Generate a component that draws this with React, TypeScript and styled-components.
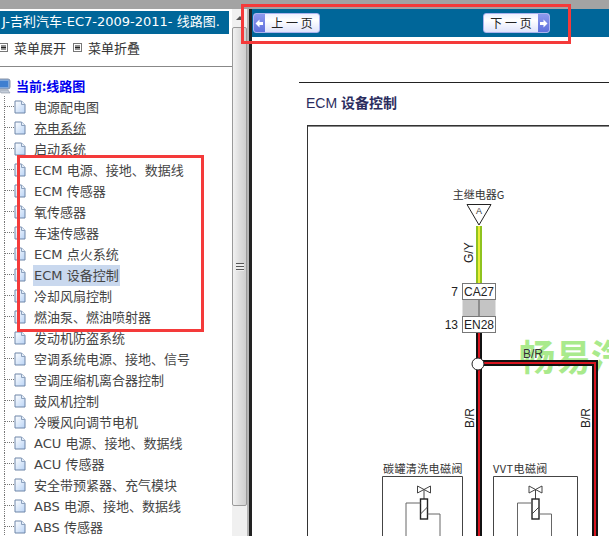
import React from "react";
import styled, { createGlobalStyle } from "styled-components";

const GlobalStyle = createGlobalStyle`
  html, body {
    margin: 0;
    padding: 0;
    background: #fff;
    overflow: hidden;
  }
  * {
    box-sizing: border-box;
  }
`;

const TREE_ITEMS = [
  "电源配电图",
  "充电系统",
  "启动系统",
  "ECM 电源、接地、数据线",
  "ECM 传感器",
  "氧传感器",
  "车速传感器",
  "ECM 点火系统",
  "ECM 设备控制",
  "冷却风扇控制",
  "燃油泵、燃油喷射器",
  "发动机防盗系统",
  "空调系统电源、接地、信号",
  "空调压缩机离合器控制",
  "鼓风机控制",
  "冷暖风向调节电机",
  "ACU 电源、接地、数据线",
  "ACU 传感器",
  "安全带预紧器、充气模块",
  "ABS 电源、接地、数据线",
  "ABS 传感器",
];

const CJK = "'Noto Sans CJK SC', sans-serif";
const ARIAL = "'Liberation Sans', sans-serif";

function PageIcon() {
  return (
    <svg width="12" height="14" viewBox="0 0 12 14">
      <defs>
        <linearGradient id="pageFill" x1="0" y1="0" x2="1" y2="1">
          <stop offset="0" stopColor="#ffffff" />
          <stop offset="1" stopColor="#b9d3f5" />
        </linearGradient>
      </defs>
      <path d="M1 1h6.5L11 4.5V13H1z" fill="url(#pageFill)" stroke="#6f86a8" strokeWidth="1" />
      <path d="M7.5 1v3.5H11" fill="#e6effa" stroke="#8ba0bd" strokeWidth="1" />
    </svg>
  );
}

function MenuIcon() {
  return (
    <svg width="9" height="9" viewBox="0 0 9 9">
      <rect x="0.5" y="0.5" width="8" height="8" fill="#fff" stroke="#777" />
      <path d="M2 3h5M2 4.5h5M2 6h5" stroke="#222" strokeWidth="1" />
    </svg>
  );
}

function ComputerIcon() {
  return (
    <svg width="12" height="16" viewBox="0 0 12 16">
      <rect x="-2" y="1" width="12" height="10" rx="2" fill="#7fa8dc" stroke="#8a94a6" />
      <rect x="0" y="3" width="8" height="6" fill="#3f7fd0" />
      <path d="M-1 12l9 0 2 3H1z" fill="#c3ccd8" stroke="#8a94a6" strokeWidth="0.6" />
    </svg>
  );
}

function NavArrow({ flip }: { flip?: boolean }) {
  return (
    <svg width="9" height="9" viewBox="0 0 9 9">
      <path
        d={flip ? "M8.5 4.5L4.5 0.5V3H1v3h3.5v2.5z" : "M0.5 4.5L4.5 0.5V3H8v3H4.5v2.5z"}
        fill="#fff"
      />
    </svg>
  );
}

function Valve({ x }: { x: number }) {
  return (
    <g fill="none" stroke="#444" strokeWidth="1">
      <path d={`M${x - 6.5} 486l13 7v-7l-13 7z`} />
      <path d={`M${x} 490v9`} />
      <rect x={x - 3.5} y="499" width="7" height="20" stroke="#222" strokeWidth="1.4" />
      <path d={`M${x - 3.5} 514l7-7`} />
      <path d={`M${x - 3.5} 503H${x - 18}V536`} stroke="#666" />
      <path d={`M${x + 3.5} 514H${x + 16}V536`} stroke="#666" />
    </g>
  );
}

function Wire({ d }: { d: string }) {
  return (
    <g fill="none">
      <path d={d} stroke="#111" strokeWidth="6" />
      <path d={d} stroke="#d8141f" strokeWidth="2" />
    </g>
  );
}

function Diagram() {
  return (
    <svg width="301" height="410" viewBox="308 126 301 410">
      <text x="519" y="371" fontSize="36" fontWeight="700" fill="#a9ea8c" fontFamily={CJK}>
        畅易汽
      </text>

      <text x="478.5" y="199" fontSize="11" textAnchor="middle" fill="#333" fontFamily={CJK}>
        主继电器G
      </text>
      <path d="M467 204.5H491L479 225z" fill="#fff" stroke="#222" strokeWidth="1" />
      <text x="479" y="214" fontSize="9" textAnchor="middle" fill="#333" fontFamily={ARIAL}>
        A
      </text>

      <path d="M479 226V283" stroke="#8fc31f" strokeWidth="6" />
      <path d="M479 226V283" stroke="#ecec3a" strokeWidth="2" />
      <text transform="translate(473 263) rotate(-90)" fontSize="12" fill="#222" fontFamily={ARIAL}>
        G/Y
      </text>

      <rect x="462.5" y="300" width="33" height="16" fill="#c4c4c4" />
      <path d="M479 300V316" stroke="#555" strokeWidth="1" />
      <rect x="462.5" y="283.5" width="33" height="16" fill="#fff" stroke="#777" />
      <rect x="462.5" y="316.5" width="33" height="16" fill="#fff" stroke="#777" />
      <text x="479" y="296" fontSize="12" textAnchor="middle" fill="#222" fontFamily={ARIAL}>
        CA27
      </text>
      <text x="479" y="329" fontSize="12" textAnchor="middle" fill="#222" fontFamily={ARIAL}>
        EN28
      </text>
      <text x="458" y="296" fontSize="12" textAnchor="end" fill="#222" fontFamily={ARIAL}>
        7
      </text>
      <text x="458" y="329" fontSize="12" textAnchor="end" fill="#222" fontFamily={ARIAL}>
        13
      </text>

      <Wire d="M479 333V536" />
      <Wire d="M479 363H595V536" />
      <circle cx="478" cy="364" r="6" fill="#fff" stroke="#222" strokeWidth="1" />

      <text x="523" y="358" fontSize="12" fill="#333" fontFamily={ARIAL}>
        B/R
      </text>
      <text transform="translate(474 428) rotate(-90)" fontSize="12" fill="#222" fontFamily={ARIAL}>
        B/R
      </text>
      <text transform="translate(590 428) rotate(-90)" fontSize="12" fill="#222" fontFamily={ARIAL}>
        B/R
      </text>

      <text x="383" y="473" fontSize="11" fill="#333" letterSpacing="0.4" fontFamily={CJK}>
        碳罐清洗电磁阀
      </text>
      <text x="493" y="473" fontSize="11" fill="#333" letterSpacing="0.4" fontFamily={CJK}>
        VVT电磁阀
      </text>
      <path d="M382.5 540V476.5H462.5V540" fill="none" stroke="#444" strokeWidth="1" />
      <path d="M493.5 540V476.5H577.5V540" fill="none" stroke="#444" strokeWidth="1" />
      <Valve x={424} />
      <Valve x={535.5} />
    </svg>
  );
}

export default function App() {
  return (
    <Page>
      <GlobalStyle />
      <TopStrip />
      <Body>
        <LeftPane>
          <HeaderTitle>J-吉利汽车-EC7-2009-2011- 线路图.</HeaderTitle>
          <MenuRow>
            <MenuItem>
              <MenuIcon />
              菜单展开
            </MenuItem>
            <MenuItem>
              <MenuIcon />
              菜单折叠
            </MenuItem>
          </MenuRow>
          <Tree>
            <TreeRoot>
              <ComputerIcon />
              当前:线路图
            </TreeRoot>
            {TREE_ITEMS.map((item) => (
              <TreeRow key={item}>
                <Connector />
                <PageIcon />
                <TreeLabel $selected={item === "ECM 设备控制"} $hover={item === "充电系统"}>
                  {item}
                </TreeLabel>
              </TreeRow>
            ))}
          </Tree>
        </LeftPane>

        <ScrollBar>
          <ScrollArrow />
          <ScrollThumb>
            <Grip />
          </ScrollThumb>
        </ScrollBar>
        <Splitter />

        <RightPane>
          <NavBar>
            <NavButton>
              <ArrowCap>
                <NavArrow />
              </ArrowCap>
              <NavLabel>上 一 页</NavLabel>
            </NavButton>
            <NavButton>
              <NavLabel>下 一 页</NavLabel>
              <ArrowCap>
                <NavArrow flip />
              </ArrowCap>
            </NavButton>
          </NavBar>
          <Content>
            <TitleRule />
            <DocTitle>
              <LatinPart>ECM </LatinPart>设备控制
            </DocTitle>
            <DiagramFrame>
              <Diagram />
            </DiagramFrame>
          </Content>
        </RightPane>
      </Body>

      <TreeMark />
      <NavMark />
    </Page>
  );
}

const Page = styled.div`
  position: relative;
  width: 609px;
  height: 536px;
  display: flex;
  flex-direction: column;
  overflow: hidden;
  font-family: "Noto Sans CJK SC", "Liberation Sans", sans-serif;
`;

const TopStrip = styled.div`
  height: 9px;
  flex: none;
  background: #a3a3a3;
`;

const Body = styled.div`
  flex: 1;
  min-height: 0;
  display: flex;
`;

const LeftPane = styled.div`
  width: 232px;
  flex: none;
  padding-top: 2px;
  overflow: hidden;
`;

const HeaderTitle = styled.div`
  width: 229px;
  height: 23px;
  padding-left: 2px;
  background: #006699;
  color: #fff;
  font-family: "DejaVu Sans", "Noto Sans CJK SC", sans-serif;
  font-size: 13px;
  line-height: 22px;
  white-space: nowrap;
  overflow: hidden;
`;

const MenuRow = styled.div`
  height: 33px;
  display: flex;
  align-items: center;
  gap: 7px;
  padding-bottom: 5px;
  border-bottom: 1px solid #888;
`;

const MenuItem = styled.div`
  display: flex;
  align-items: center;
  gap: 6px;
  font-size: 13px;
  color: #333;

  &:first-child {
    margin-left: -1px;
  }
`;

const Tree = styled.div`
  padding: 8px 0 0 4px;
`;

const TreeRoot = styled.div`
  height: 21px;
  margin-left: -4px;
  display: flex;
  align-items: center;
  gap: 4px;
  color: #0000ee;
  font-size: 13px;
  font-weight: 700;
`;

const TreeRow = styled.div`
  height: 21px;
  display: flex;
  align-items: center;
  border-left: 1px dotted #777;
`;

const Connector = styled.span`
  width: 9px;
  flex: none;
  border-top: 1px dotted #777;
`;

const TreeLabel = styled.span<{ $selected?: boolean; $hover?: boolean }>`
  margin: 2px 0 0 7px;
  padding: 1px 1px 0;
  font-family: "DejaVu Sans", "Noto Sans CJK SC", sans-serif;
  font-size: 13px;
  line-height: 20px;
  white-space: nowrap;
  color: #444;
  background: ${(props) => (props.$selected ? "#c9d8ee" : "transparent")};
  text-decoration: ${(props) => (props.$hover ? "underline" : "none")};
`;

const ScrollBar = styled.div`
  width: 15px;
  flex: none;
  display: flex;
  flex-direction: column;
  height: 100%;
  background: #f0f0f0;
`;

const ScrollArrow = styled.div`
  height: 18px;
  flex: none;
  display: flex;
  align-items: center;
  justify-content: center;

  &::before {
    content: "";
    border-left: 4px solid transparent;
    border-right: 4px solid transparent;
    border-bottom: 4px solid #555;
  }
`;

const ScrollThumb = styled.div`
  height: 479px;
  display: flex;
  align-items: center;
  justify-content: center;
  background: linear-gradient(to right, #f2f2f2, #dcdcdc 55%, #cfcfcf);
  border: 1px solid #9a9a9a;
  border-radius: 2px;
`;

const Grip = styled.div`
  width: 8px;
  height: 8px;
  background: repeating-linear-gradient(to bottom, #555 0 1px, #eee 1px 3px);
`;

const Splitter = styled.div`
  width: 5px;
  flex: none;
  background: linear-gradient(to right, #b5b5b5 0 2px, #222 2px 100%);
`;

const RightPane = styled.div`
  flex: 1;
  min-width: 0;
  display: flex;
  flex-direction: column;
`;

const NavBar = styled.div`
  height: 28px;
  flex: none;
  display: flex;
  align-items: flex-start;
  justify-content: space-between;
  padding: 4px 59px 0 1px;
  background: #006699;
`;

const NavButton = styled.div`
  width: 67px;
  height: 20px;
  display: flex;
  align-items: stretch;
  background: linear-gradient(to bottom, #eef0ff, #ffffff 35%, #dfe3fb);
  border: 1px solid #aab3ee;
  border-radius: 3px;
  overflow: hidden;
`;

const ArrowCap = styled.span`
  width: 11px;
  flex: none;
  display: flex;
  align-items: center;
  justify-content: center;
  background: linear-gradient(to bottom, #8d99ee, #5f70dc);
`;

const NavLabel = styled.span`
  flex: 1;
  text-align: center;
  color: #222;
  font-size: 12px;
  line-height: 18px;
  white-space: nowrap;
`;

const Content = styled.div`
  flex: 1;
  min-height: 0;
  padding: 45px 0 0 47px;
  overflow: hidden;
`;

const TitleRule = styled.div`
  height: 1px;
  background: #222;
`;

const DocTitle = styled.div`
  height: 42px;
  padding: 10px 0 0 7px;
  color: #2b2d5e;
  font-family: "Liberation Sans", "Noto Sans CJK SC", sans-serif;
  font-size: 14px;
  font-weight: 700;
  line-height: 20px;
  white-space: pre;
`;

const LatinPart = styled.span`
  font-weight: 400;
`;

const DiagramFrame = styled.div`
  margin-left: 8px;
  height: 420px;
  border: 1px solid #333;
  border-right: none;
  border-bottom: none;
  box-shadow: inset 0 1px 0 #888;
`;

const TreeMark = styled.div`
  position: absolute;
  left: 17px;
  top: 155px;
  width: 187px;
  height: 177px;
  border: 3px solid #f43a3a;
`;

const NavMark = styled.div`
  position: absolute;
  left: 241px;
  top: 4px;
  width: 330px;
  height: 40px;
  border: 3px solid #f43a3a;
`;
